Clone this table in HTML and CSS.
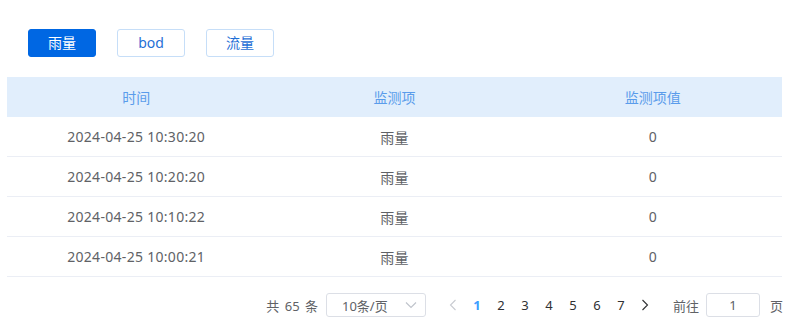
FILE: index.html
```html
<!DOCTYPE html>
<html lang="zh">
<head>
<meta charset="utf-8">
<link rel="stylesheet" href="styles.css">
</head>
<body>
<div class="page">
  <div class="tabs">
    <button class="tab active">雨量</button>
    <button class="tab">bod</button>
    <button class="tab">流量</button>
  </div>
  <div class="table">
    <div class="row head">
      <div class="cell">时间</div>
      <div class="cell">监测项</div>
      <div class="cell">监测项值</div>
    </div>
    <div class="row">
      <div class="cell">2024-04-25 10:30:20</div>
      <div class="cell">雨量</div>
      <div class="cell">0</div>
    </div>
    <div class="row">
      <div class="cell">2024-04-25 10:20:20</div>
      <div class="cell">雨量</div>
      <div class="cell">0</div>
    </div>
    <div class="row">
      <div class="cell">2024-04-25 10:10:22</div>
      <div class="cell">雨量</div>
      <div class="cell">0</div>
    </div>
    <div class="row">
      <div class="cell">2024-04-25 10:00:21</div>
      <div class="cell">雨量</div>
      <div class="cell">0</div>
    </div>
  </div>
  <div class="pager">
    <span class="total">共&nbsp;65&nbsp;条</span>
    <div class="select">
      <span>10条/页</span>
      <svg class="caret" width="12" height="8" viewBox="0 0 12 8"><path d="M1 1.5 L6 6.5 L11 1.5" fill="none" stroke="#c0c4cc" stroke-width="1.2"/></svg>
    </div>
    <span class="nav disabled"><svg width="8" height="12" viewBox="0 0 8 12"><path d="M6.5 1 L1.5 6 L6.5 11" fill="none" stroke="#c8cbd1" stroke-width="1.1"/></svg></span>
    <span class="num current">1</span>
    <span class="num">2</span>
    <span class="num">3</span>
    <span class="num">4</span>
    <span class="num">5</span>
    <span class="num">6</span>
    <span class="num">7</span>
    <span class="nav"><svg width="8" height="12" viewBox="0 0 8 12"><path d="M1.5 1 L6.5 6 L1.5 11" fill="none" stroke="#303133" stroke-width="1.1"/></svg></span>
    <span class="goto">前往</span>
    <div class="jump">1</div>
    <span class="unit">页</span>
  </div>
</div>
</body>
</html>
```
FILE: styles.css
```css
html, body {
  margin: 0;
  padding: 0;
  background: #ffffff;
}
body {
  font-family: "Noto Sans", "Noto Sans CJK SC", sans-serif;
  color: #606266;
}
.page {
  width: 775px;
  padding: 29px 0 0 7px;
}
.tabs {
  display: flex;
  gap: 21px;
  padding-left: 21px;
}
.tab {
  box-sizing: border-box;
  width: 68px;
  height: 28px;
  border: 1px solid #c6def8;
  border-radius: 3px;
  background: #ffffff;
  color: #1f6fd6;
  font-family: inherit;
  font-size: 14px;
  padding: 0;
  line-height: 26px;
}
.tab.active {
  background: #0067e3;
  border-color: #0067e3;
  color: #ffffff;
}
.table {
  margin-top: 20px;
}
.row {
  box-sizing: border-box;
  display: grid;
  grid-template-columns: 1fr 1fr 1fr;
  height: 40px;
  border-bottom: 1px solid #ebeef5;
  font-size: 14px;
  letter-spacing: 0.3px;
}
.row.head {
  background: #e1eefc;
  color: #5a9ceb;
  border-bottom: none;
  letter-spacing: 0;
}
.cell {
  display: flex;
  align-items: center;
  justify-content: center;
}
.pager {
  display: flex;
  align-items: center;
  justify-content: flex-end;
  height: 24px;
  margin-top: 16px;
  margin-right: -1px;
  font-size: 13px;
  color: #606266;
}
.total {
  margin-right: 8px;
  word-spacing: 2px;
}
.select {
  box-sizing: border-box;
  width: 100px;
  height: 24px;
  border: 1px solid #dcdfe6;
  border-radius: 3px;
  display: flex;
  align-items: center;
  justify-content: space-between;
  padding: 0 8px 0 15px;
  margin-right: 15px;
}
.caret {
  display: block;
}
.nav, .num {
  width: 24px;
  height: 24px;
  display: flex;
  align-items: center;
  justify-content: center;
  color: #303133;
}
.num.current {
  color: #409eff;
  font-weight: 700;
}
.goto {
  margin-left: 16px;
}
.jump {
  box-sizing: border-box;
  width: 54px;
  height: 24px;
  margin-left: 7px;
  border: 1px solid #dcdfe6;
  border-radius: 3px;
  display: flex;
  align-items: center;
  justify-content: center;
  color: #606266;
}
.unit {
  margin-left: 10px;
}
```
